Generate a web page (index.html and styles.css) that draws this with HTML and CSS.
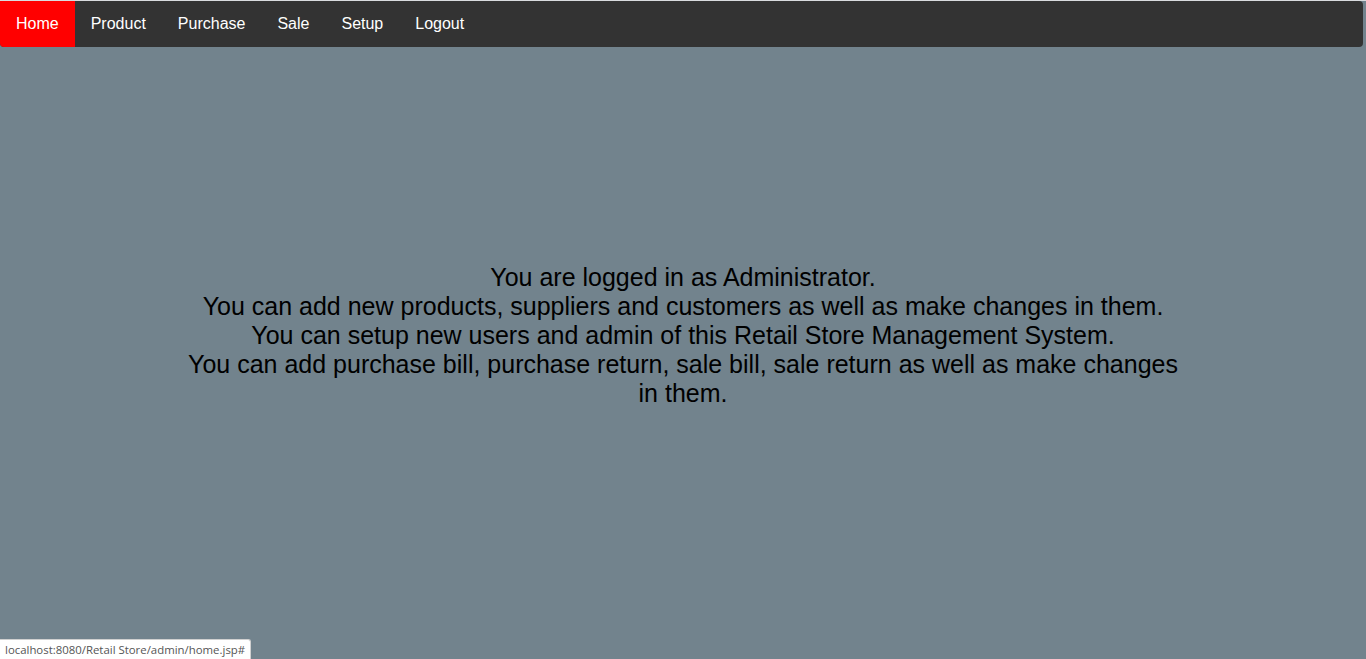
FILE: index.html
```
<!DOCTYPE html>
<html>
<head>
<meta charset="utf-8">
<title>Home</title>
<link rel="stylesheet" href="styles.css">
</head>
<body>
<ul class="nav">
  <li><a class="active" href="#">Home</a></li>
  <li><a href="#">Product</a></li>
  <li><a href="#">Purchase</a></li>
  <li><a href="#">Sale</a></li>
  <li><a href="#">Setup</a></li>
  <li><a href="#">Logout</a></li>
</ul>
<div class="content">
  You are logged in as Administrator.<br>
  You can add new products, suppliers and customers as well as make changes in them.<br>
  You can setup new users and admin of this Retail Store Management System.<br>
  You can add purchase bill, purchase return, sale bill, sale return as well as make changes in them.
</div>
<div class="status">localhost:8080/Retail Store/admin/home.jsp#</div>
</body>
</html>
```
FILE: styles.css
```
html, body {
  margin: 0;
  padding: 0;
  height: 100%;
}
body {
  background: #72838d;
  font-family: "Liberation Sans", Arial, sans-serif;
  border-top: 1px solid #d9dcdf;
  box-sizing: border-box;
  overflow: hidden;
}
.nav {
  list-style: none;
  margin: 0 3px 0 0;
  padding: 0;
  display: flex;
  background: #333333;
  border-radius: 0 4px 4px 4px;
  overflow: hidden;
}
.nav a {
  display: block;
  color: #ffffff;
  text-decoration: none;
  font-size: 16px;
  line-height: 18px;
  padding: 14px 16px;
}
.nav a.active {
  background: #ff0000;
}
.content {
  width: 1000px;
  margin: 216px auto 0;
  text-align: center;
  font-size: 25px;
  line-height: 29px;
  color: #000000;
}
.status {
  position: fixed;
  left: 0;
  bottom: 0;
  background: #ffffff;
  border: 1px solid #d0d0d0;
  border-left: none;
  border-bottom: none;
  border-top-right-radius: 3px;
  color: #555555;
  font-family: "Open Sans", "Noto Sans", sans-serif;
  font-size: 11.4px;
  line-height: 19px;
  padding: 0 5px 0 5px;
}
```
